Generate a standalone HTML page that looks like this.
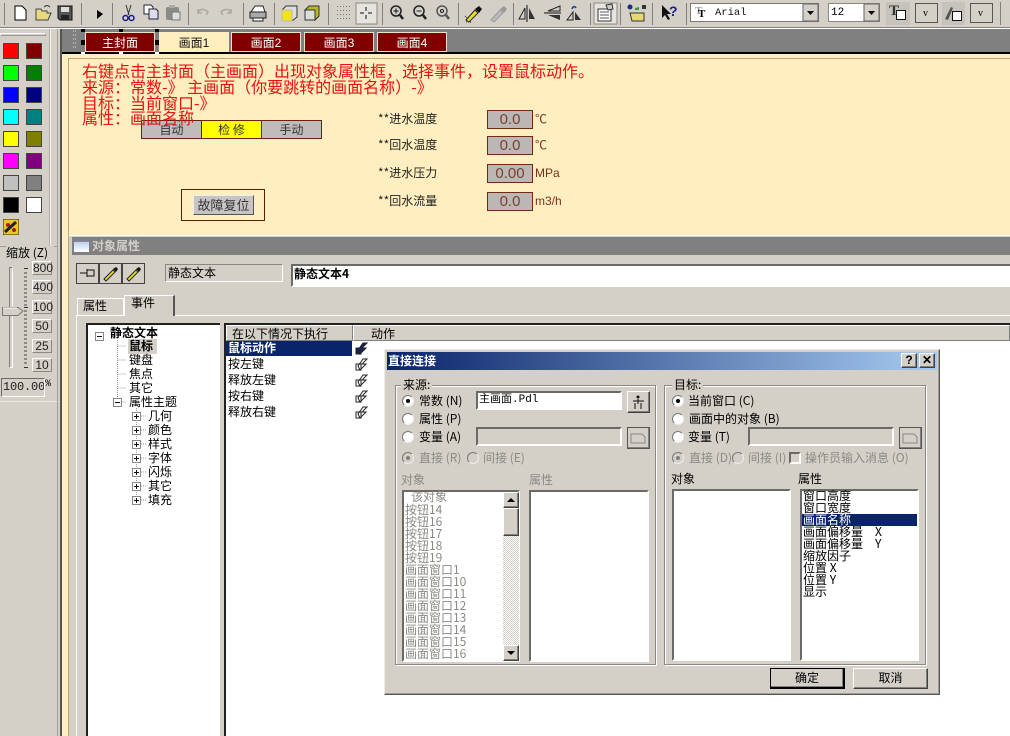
<!DOCTYPE html>
<html><head><meta charset="utf-8"><style>
html,body{margin:0;padding:0;width:1010px;height:736px;overflow:hidden;background:#fff}
#r{position:relative;width:1010px;height:736px;overflow:hidden;background:#d4d0c8;font:12px/14px "WenQuanYi Zen Hei","Noto Sans CJK SC",sans-serif;color:#000}
#r div,#r span.a{position:absolute;box-sizing:border-box;white-space:nowrap}
.sw{width:16px;height:16px;border:1px solid #444}
.s{border:2px solid;border-color:#6a6a66 #fff #fff #6a6a66;background:#fff}
.b{background:#d4d0c8;border:1px solid;border-color:#fff #404040 #404040 #fff;box-shadow:inset -1px -1px 0 #808080}
.g{border:1px solid #8a8880;box-shadow:1px 1px 0 #fff,inset 1px 1px 0 #fff}
.tab{top:32px;height:20px;width:70px;background:#800000;color:#fff;text-align:center;line-height:20px;border:1px solid #f0e0d0;font-family:"Liberation Sans","Noto Sans CJK SC",sans-serif}
.rl{font-size:16px;line-height:18px;color:#e81010;left:82px;font-family:"Noto Sans CJK SC",sans-serif;font-weight:400}
.lb{left:378px;font-size:12px;color:#222}
.bx{left:487px;width:46px;height:19px;background:#bcb6b4;border:1px solid #6e2c10;color:#7a4030;text-align:center;font:15px/17px "Liberation Sans",sans-serif}
.un{left:535px;color:#7a3020;font:12px/14px "Liberation Sans","Noto Sans CJK SC",sans-serif}
.z{left:32px;width:20px;height:14px;font:12px/13px "Liberation Sans",sans-serif;text-align:center;color:#222;border:1px solid;border-color:#fff #8a8880 #8a8880 #fff}
.gr{color:#8a8a86}
.rad{width:12px;height:12px;border-radius:50%;background:#fff;border:1px solid;border-color:#777 #eee #eee #777}
.rad.on::after{content:"";position:absolute;left:3px;top:3px;width:4px;height:4px;border-radius:50%;background:#000}
.rad.d{background:#d4d0c8}.rad.d.on::after{background:#808080}
.it{line-height:12px;height:12px}
.pl{left:346px;width:1px}
</style></head><body><div id="r">

<!-- toolbar -->
<svg width="1010" height="29" style="position:absolute;left:0;top:0" font-family="Liberation Serif">
<g stroke="#808080"><path d="M81.5 3V25M112.5 3V25M188.5 3V25M243.5 3V25M274.5 3V25M328.5 3V25M382.5 3V25M458.5 3V25M513.5 3V25M590.5 3V25M620.5 3V25M652.5 3V25M686.5 3V25M4.5 3V25M1000.5 2V25"/></g>
<path d="M15 6h7l4 4v10H15z" fill="#fff" stroke="#000"/>
<path d="M36 19V9h5l1 2h5v2h4l-3 7H36z" fill="#e8d880" stroke="#444"/><path d="M44 7c2-2 4-2 6 0" fill="none" stroke="#333"/>
<path d="M58 6h14v14H60l-2-2z" fill="#555" stroke="#111"/><rect x="61" y="7" width="8" height="5" fill="#ddd"/><rect x="61" y="15" width="8" height="5" fill="#222"/>
<path d="M97 10l6 4-6 5z" fill="#000"/>
<path d="M126 5l3 10M131 5l-3 10" stroke="#333" fill="none"/><circle cx="125.500" cy="18" r="2.500" fill="none" stroke="#1a1a90" stroke-width="1.500"/><circle cx="131.500" cy="18" r="2.500" fill="none" stroke="#1a1a90" stroke-width="1.500"/>
<path d="M144 5h7l2 2v7h-9z" fill="#fff" stroke="#223"/><path d="M149 9h7l2 2v8h-9z" fill="#dde" stroke="#223"/>
<rect x="166" y="7" width="13" height="13" rx="2" fill="#8a8a88"/><rect x="172" y="12" width="8" height="8" fill="#ddd" stroke="#777"/><rect x="169" y="5" width="6" height="3" fill="#aaa"/>
<path d="M198 12c3-4 7-3 10 0l-2 3M198 9v4h4" fill="none" stroke="#a8a8a4" stroke-width="1.500"/>
<path d="M231 12c-3-4-7-3-10 0l2 3M231 9v4h-4" fill="none" stroke="#a8a8a4" stroke-width="1.500"/>
<path d="M251 12l4-6h8l2 6z" fill="#fff" stroke="#222"/><rect x="250" y="12" width="16" height="6" fill="#aaa" stroke="#222"/><path d="M253 18h10v3h-10z" fill="#fff" stroke="#222"/>
<path d="M282 10l4-4h11v11l-5 4" fill="#ddd" stroke="#333"/><rect x="282" y="10" width="10" height="11" fill="#f2e21a" stroke="#bbb"/>
<rect x="305" y="10" width="10" height="10" fill="#ddd" stroke="#333"/><path d="M309 6h10v10l-4 4v-10h-10z" fill="#b8b820" stroke="#333"/>
<g fill="#777"><path d="M337 6h1v1h-1zM340 6h1v1h-1zM343 6h1v1h-1zM346 6h1v1h-1zM349 6h1v1h-1zM337 10h1v1h-1zM340 10h1v1h-1zM343 10h1v1h-1zM346 10h1v1h-1zM349 10h1v1h-1zM337 14h1v1h-1zM340 14h1v1h-1zM343 14h1v1h-1zM346 14h1v1h-1zM349 14h1v1h-1zM337 18h1v1h-1zM340 18h1v1h-1zM343 18h1v1h-1zM346 18h1v1h-1zM349 18h1v1h-1z"/></g>
<rect x="356" y="3" width="21" height="21" fill="#e6e4de" stroke="#8a8880"/><path d="M366 7v4M366 15v4M360 13h4M368 13h4" stroke="#111"/>
<g fill="none" stroke="#222" stroke-width="1.500"><circle cx="396" cy="11" r="5"/><path d="M400 15l3 4" stroke-width="2.500"/><path d="M393.500 11h5M396 8.500v5" stroke="#111" stroke-width="1"/>
<circle cx="419" cy="11" r="5"/><path d="M423 15l3 4" stroke-width="2.500"/><path d="M416.500 11h5" stroke-width="1"/>
<circle cx="442" cy="11" r="5" stroke="#555"/><path d="M446 15l3 4" stroke-width="2.500" stroke="#555"/><circle cx="442" cy="11" r="1.500" stroke-width="1"/></g>
<path d="M466 20l9-10 3 3-9 9z" fill="#e8e020" stroke="#222"/><path d="M475 9l4-3 3 3-3 4z" fill="#111"/><path d="M465 16l2 2M466 22h6" stroke="#222" stroke-dasharray="1 1"/>
<path d="M491 20l9-10 3 3-9 9z" fill="#bbb" stroke="#999"/><path d="M500 9l4-3 3 3-3 4z" fill="#999"/>
<path d="M527 5v17" stroke="#111"/><path d="M525 8v11h-6z" fill="none" stroke="#222"/><path d="M529 8v11h6z" fill="#333"/>
<path d="M544 13h17" stroke="#111"/><path d="M560 11h-12l12-5z" fill="none" stroke="#222"/><path d="M560 15h-12l12 5z" fill="#333"/>
<path d="M567 20l6-8v8z" fill="none" stroke="#222"/><path d="M575 20v-8l6 8z" fill="#333"/><path d="M572 9c1-3 3-3 4-1" fill="none" stroke="#1a3a90" stroke-width="1.500"/>
<rect x="594" y="3" width="23" height="21" fill="#e6e4de" stroke="#8a8880"/><path d="M598 9h13v12h-13z" fill="#fff" stroke="#333"/><path d="M600 12h9M600 15h9M600 18h9" stroke="#555"/><path d="M606 5l6-1 1 5-5 1z" fill="#ccc" stroke="#333"/>
<circle cx="630" cy="7" r="2.500" fill="#1a2a80"/><rect x="642" y="5" width="4" height="4" fill="#333"/><path d="M635 8l4-1v3h-4z" fill="#3a9a3a"/><path d="M630 13h14v8h-12z" fill="#e8d870" stroke="#333"/>
<path d="M662 5v13l3-3 3 5 2-1-3-5h4z" fill="#111"/><text x="669" y="16" font-family="Liberation Sans" font-weight="700" font-size="14" fill="#1a1a90">?</text>
<rect x="690.500" y="3.500" width="128" height="18" fill="#fff" stroke="#777"/><text x="695" y="14" font-size="11" font-weight="700" fill="#999">T</text><text x="698" y="17" font-size="11" font-weight="700">T</text><text x="715" y="15" font-family="Liberation Mono" font-size="10.500" fill="#111">Arial</text>
<rect x="803" y="4" width="15" height="17" fill="#d4d0c8" stroke="#666"/><path d="M807 11h7l-3.500 4z"/>
<rect x="828.500" y="3.500" width="51" height="18" fill="#fff" stroke="#888"/><text x="831" y="15" font-family="Liberation Mono" font-size="11">12</text>
<rect x="864" y="4" width="15" height="17" fill="#d4d0c8" stroke="#666"/><path d="M868 11h7l-3.500 4z"/>
<rect x="886" y="2" width="24" height="23" fill="#c6c3bc"/><text x="889" y="15" font-size="15" font-weight="700" fill="#333">T</text><rect x="896.500" y="10.500" width="9" height="9" fill="#fff" stroke="#111"/>
<rect x="915.500" y="3.500" width="22" height="19" fill="#d4d0c8" stroke="#555"/><text x="923" y="16" font-size="10">v</text>
<rect x="942" y="2" width="23" height="23" fill="#c6c3bc"/><path d="M945 19l6-12 2 1-5 12z" fill="#555"/><rect x="952.500" y="11.500" width="9" height="9" fill="#fff" stroke="#111"/>
<rect x="970.500" y="3.500" width="22" height="19" fill="#d4d0c8" stroke="#555"/><text x="978" y="16" font-size="10">v</text>
<path d="M0 27.500H1010" stroke="#808080"/><path d="M0 28.500H1010" stroke="#fff"/>
</svg>

<!-- left palette -->
<div style="left:0;top:33px;width:46px;height:3px;border:1px solid;border-color:#fff #999 #999 #fff"></div>
<div style="left:49px;top:29px;width:2px;height:217px;background:#f2f0ea;border-left:1px solid #b0aea6"></div>
<div class="sw" style="left:3px;top:43px;background:#f00"></div><div class="sw" style="left:26px;top:43px;background:#800000"></div>
<div class="sw" style="left:3px;top:65px;background:#0f0"></div><div class="sw" style="left:26px;top:65px;background:#008000"></div>
<div class="sw" style="left:3px;top:87px;background:#00f"></div><div class="sw" style="left:26px;top:87px;background:#000080"></div>
<div class="sw" style="left:3px;top:109px;background:#0ff"></div><div class="sw" style="left:26px;top:109px;background:#008080"></div>
<div class="sw" style="left:3px;top:131px;background:#ff0"></div><div class="sw" style="left:26px;top:131px;background:#808000"></div>
<div class="sw" style="left:3px;top:153px;background:#f0f"></div><div class="sw" style="left:26px;top:153px;background:#800080"></div>
<div class="sw" style="left:3px;top:175px;background:#c0c0c0"></div><div class="sw" style="left:26px;top:175px;background:#808080"></div>
<div class="sw" style="left:3px;top:197px;background:#000"></div><div class="sw" style="left:26px;top:197px;background:#fff"></div>
<svg width="16" height="16" style="position:absolute;left:3px;top:219px"><rect width="16" height="16" fill="#e8c820" stroke="#222"/><path d="M2 13L13 3" stroke="#222" stroke-width="3"/><circle cx="5" cy="6" r="2" fill="#a02020"/><circle cx="11" cy="11" r="2" fill="#a02020"/></svg>

<div style="left:0;top:246px;width:58px;height:1px;background:#a09e96"></div>
<div style="left:6px;top:246px;width:48px;height:14px;background:#d4d0c8;font-size:12px">缩放 (Z)</div>
<div style="left:9px;top:267px;width:4px;height:101px;border:1px solid;border-color:#808080 #fff #fff #808080;background:#d4d0c8"></div>
<svg width="24" height="14" style="position:absolute;left:1px;top:306px"><path d="M1.500 1.500H17L22 5 17 9.500H1.500z" fill="#d4d0c8" stroke="#777"/><path d="M2 2H16" stroke="#fff"/></svg>
<svg width="5" height="100" style="position:absolute;left:24px;top:268px"><path d="M0 .5H4M0 39.500H4M0 99.500H4" stroke="#333"/><path d="M0 5H3M0 9H3M0 13H3M0 17H3M0 21H3M0 25H3M0 29H3M0 33H3M0 37H3M0 43H3M0 47H3M0 51H3M0 55H3M0 59H3M0 63H3M0 67H3M0 71H3M0 75H3M0 79H3M0 83H3M0 87H3M0 91H3M0 95H3" stroke="#444"/></svg>
<div class="z" style="top:261px">800</div><div class="z" style="top:280px">400</div><div class="z" style="top:300px">100</div><div class="z" style="top:319px">50</div><div class="z" style="top:339px">25</div><div class="z" style="top:358px">10</div>
<div style="left:1px;top:378px;width:44px;height:19px;border:1px solid;border-color:#6a6a66 #fff #fff #6a6a66;font:12px/17px 'Liberation Mono',monospace;overflow:hidden;padding-left:1px;color:#222;letter-spacing:-.2px">100.000</div>
<div style="left:45px;top:378px;font:10px/14px 'Liberation Mono',monospace">%</div>
<div style="left:0;top:401px;width:59px;height:1px;background:#eceae4"></div>
<div style="left:57px;top:29px;width:1px;height:707px;background:#a09e96"></div>
<div style="left:60px;top:29px;width:2px;height:707px;background:#55544f"></div>

<!-- canvas -->
<div style="left:62px;top:29px;width:948px;height:707px;background:#ffeebf"></div>
<div style="left:62px;top:29px;width:948px;height:23px;background:#808080"></div>
<div style="left:62px;top:52px;width:948px;height:2px;background:#000"></div>
<div style="left:68px;top:58px;width:942px;height:1px;background:#b8a880"></div>
<div style="left:68px;top:58px;width:1px;height:678px;background:#b8a880"></div>

<div class="tab" style="left:85px">主封面</div>
<div class="tab" style="left:159px;background:#ffeebf;color:#111;border-color:#ffeebf">画面1</div>
<div class="tab" style="left:231px">画面2</div>
<div class="tab" style="left:304px">画面3</div>
<div class="tab" style="left:377px">画面4</div>
<svg width="90" height="30" style="position:absolute;left:72px;top:27px"><path d="M1 4H5M1 8H5M1 12H5M1 16H5M1 20H5" stroke="#ddd" stroke-dasharray="1 1"/><g fill="#000"><rect x="9" y="2" width="4" height="3"/><rect x="47" y="2" width="4" height="3"/><rect x="83" y="2" width="4" height="3"/><rect x="9" y="13" width="4" height="5"/><rect x="83" y="13" width="4" height="5"/></g><g fill="#fff"><rect x="9" y="25" width="4" height="2"/><rect x="47" y="25" width="4" height="2"/><rect x="83" y="25" width="4" height="2"/></g></svg>

<div style="left:141px;top:120px;width:61px;height:19px;background:#c0bcbc;border:1px solid #6e2010;text-align:center;line-height:18px;color:#333">自动</div>
<div style="left:201px;top:120px;width:61px;height:19px;background:#ff0;border:1px solid #6e2010;text-align:center;line-height:18px;color:#333">检 修</div>
<div style="left:261px;top:120px;width:61px;height:19px;background:#c0bcbc;border:1px solid #6e2010;text-align:center;line-height:18px;color:#333">手动</div>

<div class="rl" style="top:61px">右键点击主封面（主画面）出现对象属性框，选择事件，设置鼠标动作。</div>
<div class="rl" style="top:77px">来源：常数-》 主画面（你要跳转的画面名称）-》</div>
<div class="rl" style="top:93px">目标：当前窗口-》</div>
<div class="rl" style="top:108px">属性：画面名称</div>

<div class="lb" style="top:112px">**进水温度</div><div class="bx" style="top:110px">0.0</div><div class="un" style="top:112px">℃</div>
<div class="lb" style="top:138px">**回水温度</div><div class="bx" style="top:136px">0.0</div><div class="un" style="top:138px">℃</div>
<div class="lb" style="top:166px">**进水压力</div><div class="bx" style="top:164px">0.00</div><div class="un" style="top:166px">MPa</div>
<div class="lb" style="top:194px">**回水流量</div><div class="bx" style="top:192px">0.0</div><div class="un" style="top:194px;left:535px">m3/h</div>

<div style="left:181px;top:189px;width:84px;height:32px;border:1px solid #5a2000"></div>
<div style="left:193px;top:195px;width:61px;height:20px;background:#c8c4c4;border:1px solid;border-color:#eee #555 #555 #eee;text-align:center;line-height:18px;font-size:13px;color:#333">故障复位</div>

<!-- property panel -->
<div style="left:69px;top:235px;width:941px;height:501px;background:#d4d0c8;border-top:1px solid #fff"></div>
<div style="left:72px;top:237px;width:938px;height:18px;background:#808080"></div>
<div style="left:74px;top:241px;width:15px;height:11px;background:linear-gradient(#bcd0f0,#fff);border-top:1px solid #88a"></div>
<div style="left:92px;top:238px;font-weight:700;color:#d4d0c8;line-height:16px">对象属性</div>

<svg width="72" height="22" style="position:absolute;left:76px;top:263px"><g fill="#d4d0c8" stroke="#444"><rect x=".5" y=".5" width="22" height="20"/><rect x="23.500" y=".5" width="22" height="20"/><rect x="46.500" y=".5" width="22" height="20"/></g><path d="M4 10h7M11 6v8M11 7h7v6h-7" fill="none" stroke="#111"/><path d="M28 16l9-9 2 2-9 9z" fill="#e8e020" stroke="#222"/><path d="M37 6l3-2 2 2-2 3z" fill="#111"/><path d="M51 16l9-9 2 2-9 9z" fill="#e8e020" stroke="#222"/><path d="M60 6l3-2 2 2-2 3z" fill="#111"/></svg>
<div class="g" style="left:165px;top:264px;width:118px;height:18px;border-color:#8a8880 #fff #fff #8a8880;box-shadow:none;padding-left:2px;line-height:15px">静态文本</div>
<div class="s" style="left:291px;top:264px;width:719px;height:23px;border-right:0;font-weight:700;line-height:15px;padding-left:1px">静态文本4</div>

<div style="left:77px;top:298px;width:47px;height:18px;border:1px solid #fff;border-bottom:0;padding:0 0 0 5px">属性</div>
<div style="left:124px;top:295px;width:51px;height:21px;border:1px solid #fff;border-right:2px solid #555;border-bottom:0;padding:0 0 0 6px;background:#d4d0c8;z-index:2">事件</div>
<div style="left:76px;top:315px;width:934px;height:1px;background:#fff"></div>
<div style="left:76px;top:315px;width:1px;height:421px;background:#fff"></div>

<!-- tree -->
<div style="left:86px;top:323px;width:135px;height:413px;background:#fff;border-left:2px solid #222;border-top:2px solid #222"></div>
<div style="left:224px;top:323px;width:786px;height:413px;background:#fff;border-left:2px solid #222;border-top:2px solid #222"></div>
<div style="left:220px;top:323px;width:4px;height:413px;background:#d4d0c8"></div>
<svg width="90" height="190" style="position:absolute;left:88px;top:325px"><g stroke="#999" stroke-dasharray="1 1" fill="none"><path d="M29.500 15V77M29.500 21H38M29.500 35H38M29.500 49H38M29.500 63H38M29.500 77H38M48.500 83V173M53 91H58M53 105H58M53 119H58M53 133H58M53 147H58M53 161H58M53 175H58"/></g><g fill="#fff" stroke="#888"><rect x="7.500" y="7.500" width="8" height="8"/><rect x="25.500" y="73.500" width="8" height="8"/><rect x="44.500" y="87.500" width="8" height="8"/><rect x="44.500" y="101.500" width="8" height="8"/><rect x="44.500" y="115.500" width="8" height="8"/><rect x="44.500" y="129.500" width="8" height="8"/><rect x="44.500" y="143.500" width="8" height="8"/><rect x="44.500" y="157.500" width="8" height="8"/><rect x="44.500" y="171.500" width="8" height="8"/></g><path d="M9 11.500h5M27 77.500h5M46 91.500h5M48.500 89v5M46 105.500h5M48.500 103v5M46 119.500h5M48.500 117v5M46 133.500h5M48.500 131v5M46 147.500h5M48.500 145v5M46 161.500h5M48.500 159v5M46 175.500h5M48.500 173v5" stroke="#111"/></svg>
<div style="left:110px;top:326px;font-weight:700">静态文本</div>
<div style="left:128px;top:339px;width:29px;height:15px;background:#d4d0c8;font-weight:700;padding-left:1px">鼠标</div>
<div style="left:129px;top:353px">键盘</div><div style="left:129px;top:367px">焦点</div><div style="left:129px;top:381px">其它</div><div style="left:129px;top:395px">属性主题</div>
<div style="left:148px;top:409px">几何</div><div style="left:148px;top:423px">颜色</div><div style="left:148px;top:437px">样式</div><div style="left:148px;top:451px">字体</div><div style="left:148px;top:465px">闪烁</div><div style="left:148px;top:479px">其它</div><div style="left:148px;top:493px">填充</div>

<!-- event list -->
<div style="left:226px;top:325px;width:127px;height:16px;background:#d4d0c8;border:1px solid;border-color:#fff #808080 #808080 #fff;padding:1px 0 0 5px">在以下情况下执行</div>
<div style="left:353px;top:325px;width:657px;height:16px;background:#d4d0c8;border:1px solid;border-color:#fff #808080 #808080 #fff;padding:1px 0 0 17px">动作</div>
<div style="left:226px;top:341px;width:126px;height:15px;background:#0a246a;color:#fff;font-weight:700;padding-left:2px;line-height:14px">鼠标动作</div>
<div style="left:228px;top:357px">按左键</div><div style="left:228px;top:373px">释放左键</div><div style="left:228px;top:389px">按右键</div><div style="left:228px;top:405px">释放右键</div>
<svg width="14" height="80" style="position:absolute;left:355px;top:341px" fill="none" stroke="#222"><path d="M1 7h5v6H1zM3 9l5-7h4L7 7h4L5 13z" fill="#0a246a"/><path d="M1 23h5v6H1zM3 25l5-7h4l-5 5h4l-6 6z" fill="#fff"/><path d="M1 39h5v6H1zM3 41l5-7h4l-5 5h4l-6 6z" fill="#fff"/><path d="M1 55h5v6H1zM3 57l5-7h4l-5 5h4l-6 6z" fill="#fff"/><path d="M1 71h5v6H1zM3 73l5-7h4l-5 5h4l-6 6z" fill="#fff"/></svg>

<!-- dialog -->
<div style="left:384px;top:349px;width:556px;height:346px;background:#d4d0c8;border:1px solid;border-color:#eeece6 #555 #555 #eeece6;box-shadow:inset -1px -1px 0 #a09e96"></div>
<div style="left:387px;top:352px;width:550px;height:18px;background:linear-gradient(90deg,#0a246a,#a6caf0)"></div>
<div style="left:388px;top:354px;color:#fff;font-weight:700;line-height:14px">直接连接</div>
<div class="b" style="left:901px;top:353px;width:16px;height:15px;text-align:center;font:700 12px/13px 'Liberation Sans',sans-serif">?</div>
<div class="b" style="left:919px;top:353px;width:16px;height:15px;text-align:center;font:700 12px/12px 'Liberation Sans',sans-serif">✕</div>

<div class="g" style="left:395px;top:385px;width:261px;height:280px"></div>
<div style="left:401px;top:378px;background:#d4d0c8;padding:0 2px">来源:</div>
<div class="g" style="left:664px;top:385px;width:262px;height:280px"></div>
<div style="left:672px;top:378px;background:#d4d0c8;padding:0 2px">目标:</div>

<div class="rad on" style="left:402px;top:395px"></div><div style="left:419px;top:394px">常数 (N)</div>
<div class="rad" style="left:402px;top:413px"></div><div style="left:419px;top:412px">属性 (P)</div>
<div class="rad" style="left:402px;top:431px"></div><div style="left:419px;top:430px">变量 (A)</div>
<div class="s" style="left:476px;top:391px;width:146px;height:19px;line-height:15px;padding-left:1px;font-family:'Liberation Mono','WenQuanYi Zen Hei',monospace;font-size:11px">主画面.Pdl</div>
<div class="b" style="left:627px;top:391px;width:23px;height:22px"><svg width="21" height="20" style="display:block"><circle cx="10" cy="5" r="1.500" fill="#111"/><path d="M5 9h11M10 7v5M7 11v6M13 11v6" stroke="#111" fill="none"/></svg></div>
<div class="s" style="left:476px;top:427px;width:146px;height:19px;background:#d4d0c8"></div>
<div class="b" style="left:627px;top:427px;width:23px;height:22px;border-color:#555"><svg width="21" height="20" style="display:block"><path d="M3 15V6h11l3 3v6z" fill="#d4d0c8" stroke="#888"/></svg></div>
<div class="rad d on" style="left:402px;top:452px"></div><div class="gr" style="left:419px;top:451px">直接 (R)</div>
<div class="rad d" style="left:467px;top:452px"></div><div class="gr" style="left:483px;top:451px">间接 (E)</div>
<div class="gr" style="left:401px;top:473px">对象</div><div class="gr" style="left:529px;top:473px">属性</div>

<div class="s gr" style="left:402px;top:490px;width:118px;height:172px;overflow:hidden;font-size:12px"></div>
<div class="gr it" style="left:411px;top:491px">该对象</div>
<div class="gr it" style="left:405px;top:504px">按钮14</div><div class="gr it" style="left:405px;top:516px">按钮16</div><div class="gr it" style="left:405px;top:528px">按钮17</div><div class="gr it" style="left:405px;top:540px">按钮18</div><div class="gr it" style="left:405px;top:552px">按钮19</div>
<div class="gr it" style="left:405px;top:564px">画面窗口1</div><div class="gr it" style="left:405px;top:576px">画面窗口10</div><div class="gr it" style="left:405px;top:588px">画面窗口11</div><div class="gr it" style="left:405px;top:600px">画面窗口12</div><div class="gr it" style="left:405px;top:612px">画面窗口13</div><div class="gr it" style="left:405px;top:624px">画面窗口14</div><div class="gr it" style="left:405px;top:636px">画面窗口15</div><div class="gr it" style="left:405px;top:648px">画面窗口16</div>
<div style="left:503px;top:492px;width:16px;height:169px;background:repeating-conic-gradient(#d4d0c8 0 25%,#fff 0 50%) 0 0/2px 2px"></div>
<div class="b" style="left:503px;top:492px;width:16px;height:16px"><svg width="14" height="14" style="display:block"><path d="M3 9h8L7 5z"/></svg></div>
<div class="b" style="left:503px;top:508px;width:16px;height:28px"></div>
<div class="b" style="left:503px;top:645px;width:16px;height:16px"><svg width="14" height="14" style="display:block"><path d="M3 5h8L7 9z"/></svg></div>
<div class="s" style="left:529px;top:490px;width:120px;height:172px"></div>

<div class="rad on" style="left:672px;top:395px"></div><div style="left:688px;top:394px">当前窗口 (C)</div>
<div class="rad" style="left:672px;top:413px"></div><div style="left:689px;top:412px">画面中的对象 (B)</div>
<div class="rad" style="left:672px;top:431px"></div><div style="left:688px;top:430px">变量 (T)</div>
<div class="s" style="left:748px;top:427px;width:146px;height:19px;background:#d4d0c8"></div>
<div class="b" style="left:899px;top:427px;width:23px;height:22px;border-color:#555"><svg width="21" height="20" style="display:block"><path d="M3 15V6h11l3 3v6z" fill="#d4d0c8" stroke="#888"/></svg></div>
<div class="rad d on" style="left:672px;top:452px"></div><div class="gr" style="left:689px;top:451px">直接 (D)</div>
<div class="rad d" style="left:732px;top:452px"></div><div class="gr" style="left:748px;top:451px">间接 (I)</div>
<div class="s" style="left:789px;top:452px;width:12px;height:12px;background:#d4d0c8"></div><div class="gr" style="left:805px;top:451px">操作员输入消息 (O)</div>
<div style="left:671px;top:472px">对象</div><div style="left:798px;top:472px">属性</div>

<div class="s" style="left:672px;top:489px;width:119px;height:172px"></div>
<div class="s" style="left:800px;top:489px;width:119px;height:172px"></div>
<div class="it" style="left:803px;top:490px">窗口高度</div><div class="it" style="left:803px;top:502px">窗口宽度</div>
<div class="it" style="left:802px;top:514px;width:115px;background:#0a246a;color:#fff;padding-left:1px">画面名称</div>
<div class="it" style="left:803px;top:526px">画面偏移量　X</div><div class="it" style="left:803px;top:538px">画面偏移量　Y</div><div class="it" style="left:803px;top:550px">缩放因子</div><div class="it" style="left:803px;top:562px">位置 X</div><div class="it" style="left:803px;top:574px">位置 Y</div><div class="it" style="left:803px;top:586px">显示</div>

<div class="b" style="left:770px;top:668px;width:75px;height:21px;border:1px solid #000;border-width:1px 2px 2px 1px;text-align:center;line-height:18px">确定</div>
<div class="b" style="left:853px;top:668px;width:75px;height:21px;text-align:center;line-height:18px">取消</div>
</div></body></html>
